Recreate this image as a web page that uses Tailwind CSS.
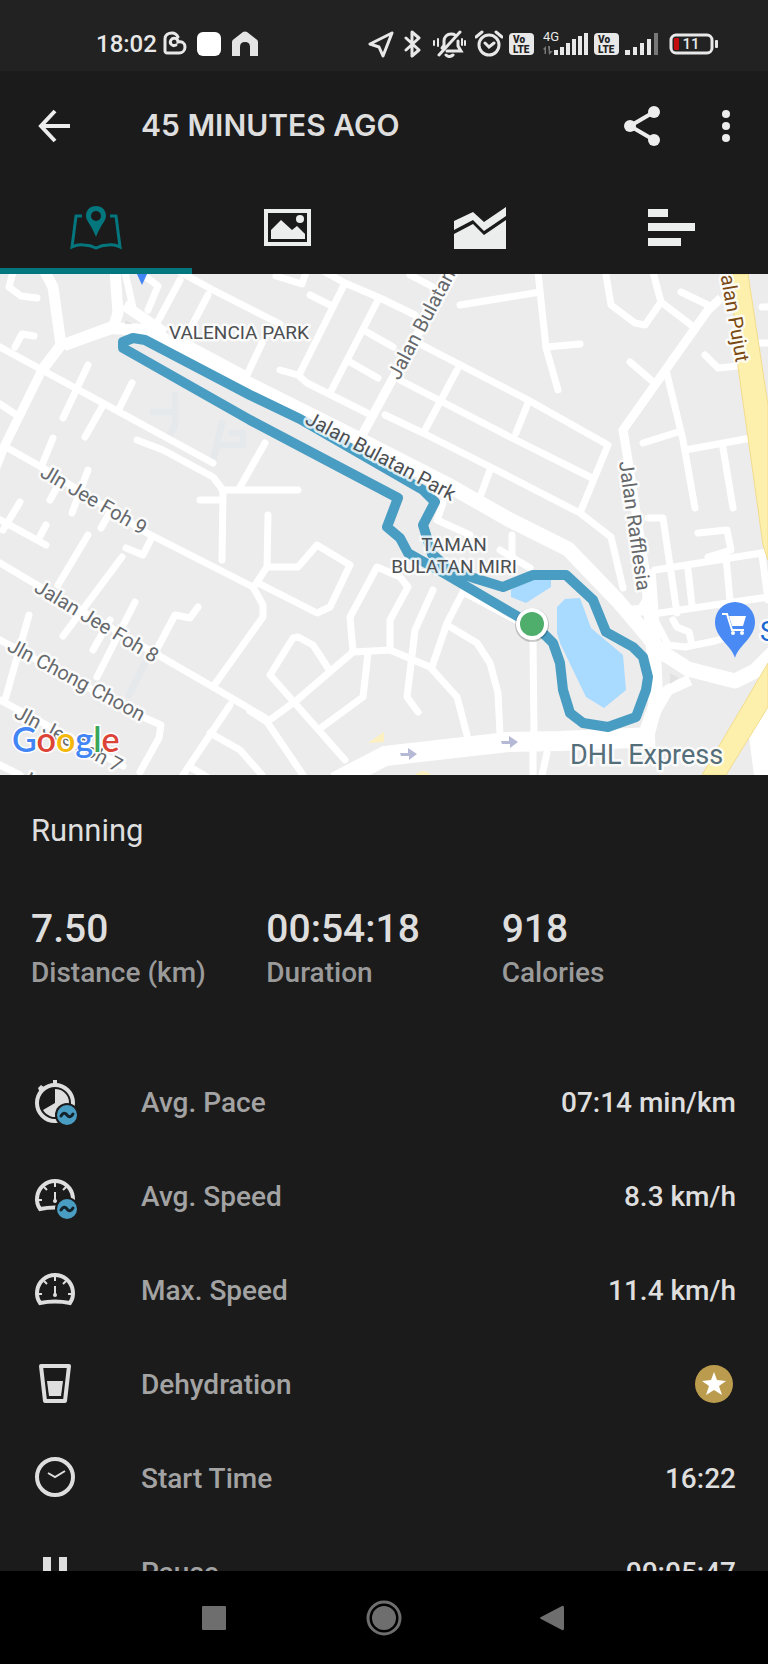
<!DOCTYPE html>
<html lang="en">
<head>
    <meta charset="UTF-8">
    <meta name="viewport" content="width=device-width, initial-scale=1.0">
    <title>45 minutes ago</title>
    <script src="https://cdn.jsdelivr.net/npm/@tailwindcss/browser@4"></script>
</head>
<body class="bg-[#1b1b1b] font-[Roboto,sans-serif]">
<div class="flex h-screen flex-col overflow-hidden text-[#dedede]">

    <!-- Status bar -->
    <div class="flex h-[71px] shrink-0 items-center justify-between bg-[#222222] pt-4 pr-[50px] pl-24 text-[#e8e8e8]">
        <div class="flex items-center gap-2.5">
            <div class="flex items-center gap-1.5">
                <span class="text-2xl font-medium">18:02</span>
                <svg class="h-7 w-6" viewBox="0 0 24 28" fill="none" stroke="currentColor" stroke-width="3" stroke-linecap="round">
                    <path d="M13 15C9 17 6 13 8 10c2-3 7-2 7 2 4-1 7 1 7 5 0 4-3 6-6 6H4c-1 0-2-1-2-2V9c0-4 3-6 7-6 3 0 5 2 6 4"/>
                </svg>
            </div>
            <svg class="h-7 w-6" viewBox="0 0 24 28"><rect y="2" width="24" height="24" rx="6" fill="#fff"/></svg>
            <svg class="h-7 w-7" viewBox="0 0 28 28" fill="#e4e4e4"><path d="M1 26V12q0-2 2-3L12 2q2-1 4 0l9 7q2 1 2 3v14h-8V17q0-5-5-5t-5 5v9z"/></svg>
        </div>
        <div class="flex items-center gap-1.5">
            <svg class="h-7 w-[29px]" viewBox="0 0 29 28" fill="none" stroke="currentColor" stroke-width="3" stroke-linejoin="round"><path d="M24 3 2 14l9 3 4 9z"/></svg>
            <svg class="h-7 w-[22px]" viewBox="0 0 22 28" fill="none" stroke="currentColor" stroke-width="3" stroke-linejoin="round" stroke-linecap="round"><path d="M3 8l13 12-7 6V2l7 6L3 20"/></svg>
            <svg class="h-7 w-[38px]" viewBox="0 0 38 28" fill="none" stroke="currentColor" stroke-width="3" stroke-linecap="round">
                <path d="M11 18l2-3v-4c0-4 3-7 7-7 2 0 3 0 4 1M27 11v5l3 5H16M29 2 8 25"/>
                <path d="M15 25q3 3 7 0" />
                <path d="M3 11v4M7 9v7M34 11v4M31 9v6" stroke-width="2"/>
            </svg>
            <svg class="h-7 w-7" viewBox="0 0 28 28" fill="none" stroke="currentColor" stroke-width="3" stroke-linecap="round">
                <circle cx="14" cy="15" r="10"/><path d="M10 13l4 4 5-4M1 7l6-5M27 7l-6-5"/>
            </svg>
            <svg class="h-7 w-7" viewBox="0 0 28 28">
                <rect y="3" width="25" height="22" rx="4" fill="currentColor"/>
                <text x="4" y="13" font-size="10" font-weight="900" fill="#222">Vo</text>
                <text x="4" y="23" font-size="10" font-weight="900" fill="#222">LTE</text>
            </svg>
            <svg class="h-7 w-[45px]" viewBox="0 0 45 28" fill="currentColor">
                <text x="0" y="11" font-size="13">4G</text>
                <path d="M0 19l3-3v8H1.500v-4zM5 16h2v5h3l-4 4zM7 17h1z" fill="#777"/>
                <path d="M11 20h4v5h-4zM17 17h4v8h-4zM23 13h4v12h-4zM29 9h4v16h-4zM35 6h4v19h-4zM41 3h4v22h-4z"/>
            </svg>
            <svg class="h-7 w-[25px]" viewBox="0 0 25 28">
                <rect y="3" width="25" height="22" rx="4" fill="currentColor"/>
                <text x="4" y="13" font-size="10" font-weight="900" fill="#222">Vo</text>
                <text x="4" y="23" font-size="10" font-weight="900" fill="#222">LTE</text>
            </svg>
            <svg class="h-7 w-[38px]" viewBox="0 0 38 28" fill="currentColor">
                <path d="M0 20h5v5H0zM8 17h4v8H8zM15 13h4v12h-4zM22 9h4v16h-4z"/>
                <path d="M29 3h4v22h-4z" fill="#777"/>
            </svg>
            <svg class="h-7 w-[49px]" viewBox="0 0 49 28">
                <rect x="2" y="5" width="41" height="18" rx="5" fill="none" stroke="currentColor" stroke-width="3"/>
                <rect x="46" y="10" width="3" height="8" rx="1" fill="currentColor"/>
                <rect x="5" y="8" width="5" height="12" rx="1" fill="#c40d0d"/>
                <text x="22" y="19" font-size="15" font-weight="500" text-anchor="middle" fill="currentColor">11</text>
            </svg>
        </div>
    </div>

    <!-- App bar -->
    <header class="flex h-[109px] shrink-0 items-center pr-[22px] pl-[31px]">
        <button type="button" aria-label="Back" class="text-[#ededed]">
            <svg class="h-12 w-12" viewBox="0 0 48 48" fill="none" stroke="currentColor" stroke-width="4"><path d="M39 24H10M24 9 10 24l14 15"/></svg>
        </button>
        <h1 class="ml-[62px] flex-1 font-[Inter,sans-serif] text-[30px] font-semibold">45 MINUTES AGO</h1>
        <button type="button" aria-label="Share" class="text-[#ededed]">
            <svg class="h-12 w-12" viewBox="0 0 48 48" fill="currentColor">
                <path d="M36 10 12 24l24 14" fill="none" stroke="currentColor" stroke-width="4"/>
                <circle cx="36" cy="10" r="6"/><circle cx="12" cy="24" r="6"/><circle cx="36" cy="38" r="6"/>
            </svg>
        </button>
        <button type="button" aria-label="More options" class="ml-10 text-[#ededed]">
            <svg class="h-12 w-10" viewBox="0 0 40 48" fill="currentColor"><circle cx="20" cy="12" r="4"/><circle cx="20" cy="24" r="4"/><circle cx="20" cy="36" r="4"/></svg>
        </button>
    </header>

    <!-- Tabs -->
    <nav class="grid h-[94px] shrink-0 grid-cols-4 text-[#eceeed]">
        <button type="button" aria-label="Map" class="flex items-center justify-center border-y-6 border-t-transparent border-b-[#04777e] pt-0.5 text-[#04777e]">
            <svg class="h-14 w-14" viewBox="0 0 56 56" fill="none" stroke="currentColor">
                <path d="M14 16H8L4 47q6-3 12-2 6 0 12 3 6-3 12-3 6-1 12 2L48 16h-6" stroke-width="3"/>
                <path d="M28 6c-6 0-10 4-10 10 0 5 5 8 10 21 5-13 10-16 10-21 0-6-4-10-10-10zm0 5a5 5 0 1 1 0 10 5 5 0 1 1 0-10z" fill="currentColor" fill-rule="evenodd" stroke="none"/>
            </svg>
        </button>
        <button type="button" aria-label="Photos" class="flex items-center justify-center pt-0.5">
            <svg class="h-14 w-14" viewBox="0 0 56 56" fill="currentColor">
                <rect x="6" y="11" width="43" height="33" fill="none" stroke="currentColor" stroke-width="4"/>
                <path d="M11 39v-9l10-10 11 10 5-4 8 8v5z"/><circle cx="40" cy="19" r="4"/>
            </svg>
        </button>
        <button type="button" aria-label="Charts" class="flex items-center justify-center pt-0.5">
            <svg class="h-14 w-14" viewBox="0 0 56 56" fill="currentColor">
                <path d="M2 21 21 12l11 10L54 7v9L32 31 21 20 2 30z"/>
                <path d="M2 34l19-10 11 11 22-15v29H2z"/>
            </svg>
        </button>
        <button type="button" aria-label="Details" class="flex items-center justify-center pt-0.5">
            <svg class="h-14 w-14" viewBox="0 0 56 56" fill="currentColor"><path d="M4 9h20v8H4zM4 23h47v8H4zM4 38h33v8H4z"/></svg>
        </button>
    </nav>

    <main class="min-h-0 flex-1 overflow-y-auto [scrollbar-width:none]">
        <!-- Route map -->
        <svg class="block h-[501px] w-full" viewBox="0 274 768 501" preserveAspectRatio="xMidYMid slice" role="img" aria-label="Route map">
            <rect y="274" width="768" height="501" fill="#ececec"/>

            <g fill="none" stroke="#e5e9ec" stroke-width="7" stroke-linejoin="round" stroke-linecap="round">
                <path d="M175 395v30l-7 14M153 412h22M222 423l-9 38M216 445h27v-12h-11M145 663l-16 32"/>
            </g>

            <!-- Small streets -->
            <g fill="none" stroke="#fff" stroke-width="7" stroke-linejoin="round" stroke-linecap="round">
                <path d="M13 272 9 287l12 9 16 2M125 272l8 36M146 277l12 9-10 24M180 272l33 18 67 34M180 280l-23 43M208 295l-20 38M187 343l60 32 15-32"/>
                <path d="M15 347l7-13 12 2M0 347l213 116M137 440l26 10 50 27 10 13-1 70M88 365 63 418M132 383l-12 24M102 407 85 437M53 438 42 465M88 470 72 513M60 482l-10 18M20 502 3 530M110 512l-9 16M0 404l15 10"/>
                <path d="M6 447l37 21 104 65 106 54M-5 517l51 28M46 525l-8 15M200 500h22M222 490h76M265 443l-25 44"/>
                <path d="M276 276l26 8 4-12M325 272l20 11 35 15 35 17M345 283l-45 90M310 295l20 10M378 300l-48 93M367 332l26 15M350 362l28 16M280 370l18 5 9 8 60 30M418 343l110 57 80 45-28 68M400 380l110 57 80 40M385 415l38 18 87 44 70 36 31 24 12 51M457 370l-32 60M528 403l-12 30M490 470l-10 27M443 503l-6 17 33 15M410 275l23 12"/>
                <path d="M460 305l80-13M538 272l8 76 12 42M546 347l34-3M606 275l5 30 24 18 10 2 16-23-8-30M661 302l30 23M681 292l27 13M630 362l21 18M666 370l17 70 12 68M643 443l35-11M685 450l66-12M723 448l10 60M705 355l13 13 20-2M762 307h10M760 343h10"/>
                <path d="M648 518h15l14 95M698 533l29-3 4 20-23 7M655 570l113-18M660 613l108-16M688 570l4 35M726 557l4 43M762 555l6 45M655 620l13 25 17 2 30-6 25-8M673 620l4 7 12 5 3 13"/>
                <path d="M0 563l37 22 176 102 54 32M0 640l143 77 18 8-2 13-19 34M0 700l123 66M88 535l-30 50M122 557 63 636M110 620l-17 30M135 602 97 677M29 615 5 700M126 548l17 7 9-18M198 607l-8 11-15-3-17 32M253 587l10 18v12l-13 18-37 52M230 705l-47 70M210 733l30 17 22 25M190 767l17 10M0 765l20 10"/>
                <path d="M255 585l12-18 1-52M268 567h30l19-22 33 20-20 42-13 6-59-30M328 668l-15-23-15-8-5 1-23 37 75 85M433 590l-18 40-8 67 11 15M447 625l30 18 13 20 8 30 2 42M368 653l-5 44-41 30M512 535v22M500 550l30 18"/>
                <path d="M267 722l30-22 56-48 37-2 40 17 27 30 10 38M353 652l-3-35 27-50 23 10 8 10-18 33v30M463 592l-16 31-15 44M463 592l62 33M250 711l17 11 36 53M533 640l1 95M533 750v25M547 753l-5 22"/>
            </g>

            <!-- Larger streets -->
            <g fill="none" stroke="#fff" stroke-width="11" stroke-linejoin="round">
                <path d="M44 270l9 17 8 58-19 25" />
                <path d="M42 370 4 447l-8 20M721 298l-13 12-85 120 5 30 17 110M455 268l-63 112-31 57" stroke-width="9"/>
                <path d="M115 270l3 43-5 15-49 17M124 305l41 28M645 570l7 30M625 612l17-2 8-13M690 680l-22 10-13 22-7 28"/>
                <path d="M64 345l46-17 37 2" stroke-width="12"/>
                <path d="M140 328l110 57 110 55 90 46 58 33 60 30 50 52 23 27 19 23 28 18 47 12 20-10 20-20" stroke-width="15"/>
                <path d="M648 570l5 70 3 65-12 34" stroke-width="15"/>
                <path d="M335 782l50-26 123-14 52-1 95-4" stroke-width="20"/>
            </g>
            <path d="M670 673l9 5-9 6zM125 320l8 4h-8z" fill="#e2e2e2"/>
            <path d="M768 707l-20 23 6 45h14z" fill="#fff"/>
            <path d="M731 274h17l20 131v155l-5-15-9-65-16-113zM768 663v44l-42 68h-24z" fill="#fdf0ad" stroke="#f3dc8c"/>
            <path d="M368 743l16-11v10zM415 775q8-8 16 0z" fill="#fdf0c0"/>
            <path d="M400 753h8v-5l9 6-8 6v-4h-8zM501 741h8v-5l9 6-8 6v-4h-8z" fill="#b6b9d6"/>

            <!-- Ponds -->
            <path d="M511 590l14-10h26v7l-25 16-15-6zM557 607l8-8 15-1 11 30 32 27 3 35-22 18-18-11-26-54-3-10z" fill="#a9daff"/>

            <!-- Track -->
            <path d="M145 340l-12-2-10 4v6l127 72 148 78-11 29 13 11 8 15 39 22 63 37 21 12 14 11 8 8 7 20 3 27 7 23 13 10 25 4 28-10 10-27 2-13-5-20-10-10-27-15-13-32-27-25h-33l-25 10-5 2-26-8-27-9-18-16-9-29 12-23-12-12-123-71-50-24z" fill="none" stroke="#4a9dc2" stroke-width="10" stroke-linejoin="round"/>

            <!-- Labels -->
            <g font-family="Roboto, sans-serif" font-size="20" fill="#4c4f52" stroke="#fff" stroke-opacity=".8" stroke-width="5" stroke-linejoin="round" paint-order="stroke">
                <text x="169" y="339" font-size="19">VALENCIA PARK</text>
                <text transform="translate(304 423) rotate(28)">Jalan Bulatan Park</text>
                <text x="454" y="551" font-size="19" text-anchor="middle">TAMAN</text>
                <text x="454" y="573" font-size="19" text-anchor="middle">BULATAN MIRI</text>
                <g fill="#66696c">
                    <text transform="translate(399 381) rotate(-62)">Jalan Bulatan</text>
                    <text transform="translate(619 462) rotate(82)">Jalan Rafflesia</text>
                    <text transform="translate(39 476) rotate(30)">Jln Jee Foh 9</text>
                    <text transform="translate(33 591) rotate(31)">Jalan Jee Foh 8</text>
                    <text transform="translate(6 650) rotate(28)">Jln Chong Choon</text>
                    <text transform="translate(13 717) rotate(28)">Jln Jee Foh 7</text>
                    <text transform="translate(18 781) rotate(28)">Jalan</text>
                </g>
                <text transform="translate(736 363) rotate(80)" text-anchor="end" fill="#7b4a14">Jalan Pujut</text>
                <text x="570" y="764" font-size="27" fill="#546e7a">DHL Express</text>
                <text x="760" y="641" font-size="27" fill="#1a67d2">S</text>
            </g>

            <!-- Shop pin -->
            <path d="M136 272h12l-6 13z" fill="#4285f4"/>
            <path d="M735 658c-3-12-20-20-20-36a20 20 0 0 1 40 0c0 16-17 24-20 36z" fill="#4a8af4"/>
            <path d="M722 614h5l5 16h12" fill="none" stroke="#fff" stroke-width="2"/>
            <path d="M729 616h17l-3 10h-11z" fill="#fff"/>
            <circle cx="733" cy="633" r="2" fill="#fff"/><circle cx="742" cy="633" r="2" fill="#fff"/>

            <!-- Position marker -->
            <circle cx="532" cy="625" r="17" fill="#000" fill-opacity=".2"/>
            <circle cx="532" cy="624" r="16" fill="#fff"/>
            <circle cx="532" cy="624" r="12" fill="#4fae6b"/>

            <text x="12" y="752" font-family="Lato, sans-serif" font-size="34" font-weight="600" stroke="#fff" stroke-width="3" paint-order="stroke"><tspan fill="#4285f4">G</tspan><tspan fill="#dc4437">o</tspan><tspan fill="#f4b70a">o</tspan><tspan fill="#4285f4">g</tspan><tspan fill="#3aa757">l</tspan><tspan fill="#dc4437">e</tspan></text>
        </svg>

        <!-- Summary -->
        <section class="px-[31px] pt-9">
            <h2 class="text-[31px] leading-10">Running</h2>
            <dl class="mt-[54px] grid grid-cols-3 font-medium">
                <div class="flex flex-col-reverse">
                    <dt class="text-[28px] leading-10 text-[#9a9a9a]">Distance (km)</dt>
                    <dd class="text-[39px] leading-12">7.50</dd>
                </div>
                <div class="flex flex-col-reverse">
                    <dt class="text-[28px] leading-10 text-[#9a9a9a]">Duration</dt>
                    <dd class="text-[39px] leading-12">00:54:18</dd>
                </div>
                <div class="flex flex-col-reverse">
                    <dt class="text-[28px] leading-10 text-[#9a9a9a]">Calories</dt>
                    <dd class="text-[39px] leading-12">918</dd>
                </div>
            </dl>
        </section>

        <!-- Details -->
        <ul class="mt-[63px] pr-8 pl-[31px] text-[28px] font-medium">
            <li class="flex h-[94px] items-center">
                <svg class="h-12 w-12" viewBox="0 0 48 48" fill="currentColor">
                    <circle cx="24" cy="24" r="18" fill="none" stroke="currentColor" stroke-width="4"/>
                    <path d="M22 1h4v5h-4zM7 9l3-3 4 3-5 5z"/>
                    <path d="M24 10a14 14 0 1 1-12 21l12-7z"/>
                    <circle cx="36" cy="36" r="12" fill="#1b1b1b"/><circle cx="36" cy="36" r="10" fill="#4a9dc2"/>
                    <path d="M30 37q3-5 6-1t6-1" fill="none" stroke="#14232b" stroke-width="3" stroke-linecap="round"/>
                </svg>
                <span class="ml-[62px] flex-1 text-[#a3a3a3]">Avg. Pace</span>
                <span>07:14 min/km</span>
            </li>
            <li class="flex h-[94px] items-center">
                <svg class="h-12 w-12" viewBox="0 0 48 48" fill="none" stroke="currentColor">
                    <path d="M9 36A18 18 0 1 1 39 36Q24 33 9 36z" stroke-width="4"/>
                    <path d="M24 10v4M13 14l3 3M35 14l-3 3M7 27h4M41 27h-4M24 19v8" stroke-width="2"/>
                    <circle cx="24" cy="28" r="2" fill="currentColor" stroke="none"/>
                    <circle cx="36" cy="36" r="12" fill="#1b1b1b" stroke="none"/><circle cx="36" cy="36" r="10" fill="#4a9dc2" stroke="none"/>
                    <path d="M30 37q3-5 6-1t6-1" stroke="#14232b" stroke-width="3" stroke-linecap="round"/>
                </svg>
                <span class="ml-[62px] flex-1 text-[#a3a3a3]">Avg. Speed</span>
                <span>8.3 km/h</span>
            </li>
            <li class="flex h-[94px] items-center">
                <svg class="h-12 w-12" viewBox="0 0 48 48" fill="none" stroke="currentColor">
                    <path d="M9 36A18 18 0 1 1 39 36Q24 33 9 36z" stroke-width="4"/>
                    <path d="M24 10v4M13 14l3 3M35 14l-3 3M7 27h4M41 27h-4M24 19v8" stroke-width="2"/>
                    <circle cx="24" cy="28" r="2" fill="currentColor" stroke="none"/>
                </svg>
                <span class="ml-[62px] flex-1 text-[#a3a3a3]">Max. Speed</span>
                <span>11.4 km/h</span>
            </li>
            <li class="flex h-[94px] items-center">
                <svg class="h-12 w-12" viewBox="0 0 48 48" fill="currentColor">
                    <path d="M10 5h28l-4 35H14z" fill="none" stroke="currentColor" stroke-width="4" stroke-linejoin="round"/>
                    <path d="M16 20h16l-2 15H18z"/>
                </svg>
                <span class="ml-[62px] flex-1 text-[#a3a3a3]">Dehydration</span>
                <svg class="mr-0.5 h-10 w-10" viewBox="0 0 40 40" role="img" aria-label="Premium feature">
                    <circle cx="20" cy="19" r="19" fill="#bb9c4e"/>
                    <path d="M20 7l3 8 9 1-7 5 3 9-8-5-8 5 3-9-7-5 9-1z" fill="#fff"/>
                </svg>
            </li>
            <li class="flex h-[94px] items-center">
                <svg class="h-12 w-12" viewBox="0 0 48 48" fill="none" stroke="currentColor">
                    <circle cx="24" cy="22" r="18" stroke-width="4"/><path d="M17 18l7 4 10-6" stroke-width="2"/>
                </svg>
                <span class="ml-[62px] flex-1 text-[#a3a3a3]">Start Time</span>
                <span>16:22</span>
            </li>
            <li class="flex h-[94px] items-center">
                <svg class="h-12 w-12" viewBox="0 0 48 48" fill="currentColor"><path d="M12 8h8v32h-8zM28 8h8v32h-8z"/></svg>
                <span class="ml-[62px] flex-1 text-[#a3a3a3]">Pause</span>
                <span>00:05:47</span>
            </li>
        </ul>
    </main>

    <!-- System navigation -->
    <div class="flex h-[93px] shrink-0 items-center justify-center gap-[134px] bg-black text-[#6e6e6e]">
        <button type="button" aria-label="Recent apps"><svg class="h-9 w-9" viewBox="0 0 36 36" fill="currentColor"><rect x="6" y="6" width="24" height="24" rx="1"/></svg></button>
        <button type="button" aria-label="Home"><svg class="h-9 w-9" viewBox="0 0 36 36" fill="currentColor"><circle cx="18" cy="18" r="12"/><circle cx="18" cy="18" r="16" fill="none" stroke="currentColor" stroke-width="3"/></svg></button>
        <button type="button" aria-label="Back"><svg class="h-9 w-9" viewBox="0 0 36 36" fill="currentColor"><path d="M5 17 26 6q2-1 2 2v20q0 3-2 2L5 19q-2-1 0-2z"/></svg></button>
    </div>
</div>
</body>
</html>
